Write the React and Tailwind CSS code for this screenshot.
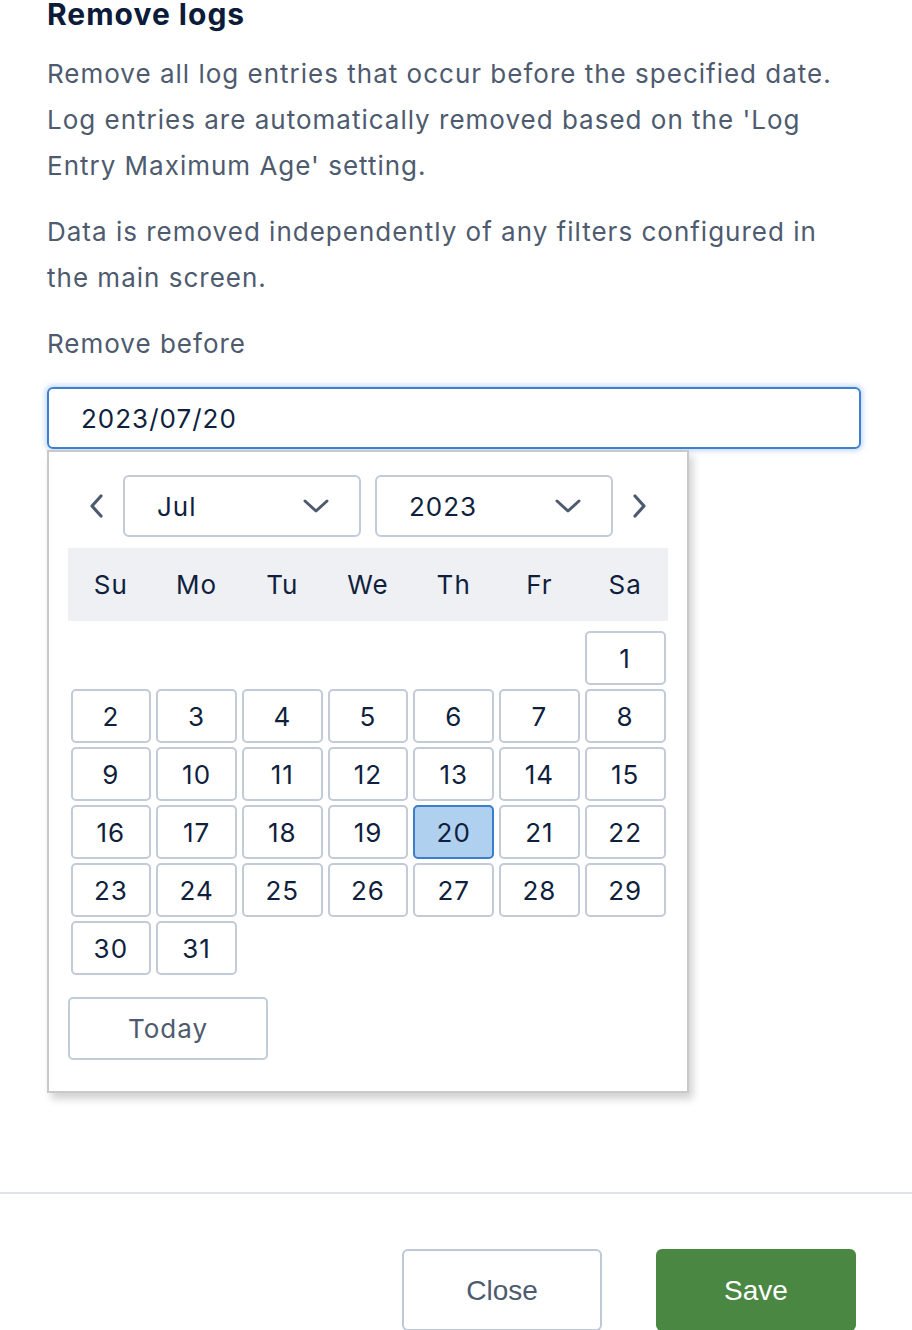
import React from "react";

const weekDays = ["Su", "Mo", "Tu", "We", "Th", "Fr", "Sa"];

// July 2023 starts on a Saturday
const buildWeeks = () => {
  const cells = Array(6).fill(null);
  for (let d = 1; d <= 31; d++) cells.push(d);
  while (cells.length % 7) cells.push(null);
  const weeks = [];
  for (let i = 0; i < cells.length; i += 7) weeks.push(cells.slice(i, i + 7));
  return weeks;
};

const ChevronDown = () => (
  <svg width="26" height="16" viewBox="0 0 26 16" fill="none">
    <path d="M2 3l11 10L24 3" stroke="#4e5b6f" strokeWidth="3" strokeLinecap="round" strokeLinejoin="round" />
  </svg>
);

const ChevronSide = ({ dir }) => (
  <svg width="16" height="26" viewBox="0 0 16 26" fill="none">
    {dir === "left" ? (
      <path d="M12 3L3 13l9 10" stroke="#4e5b6f" strokeWidth="3.2" strokeLinecap="round" strokeLinejoin="round" />
    ) : (
      <path d="M4 3l9 10-9 10" stroke="#4e5b6f" strokeWidth="3.2" strokeLinecap="round" strokeLinejoin="round" />
    )}
  </svg>
);

const Select = ({ value }) => (
  <div className="w-[238px] h-[62px] border-2 border-[#c3cbd8] rounded-[6px] flex items-center justify-between pl-[32px] pr-[30px] text-[26px] text-[#0f1f3d]">
    <span>{value}</span>
    <ChevronDown />
  </div>
);

const DatePopover = () => {
  const weeks = buildWeeks();
  return (
    <div className="absolute top-full left-0 mt-px w-[642px] bg-white border-2 border-[#c9c9c9] shadow-[4px_6px_8px_rgba(0,0,0,0.18)] px-[19px] pt-[23px] pb-[31px]">
      <div className="flex items-center">
        <div className="w-[55px] h-[62px] flex items-center justify-center pl-[3px]">
          <ChevronSide dir="left" />
        </div>
        <Select value="Jul" />
        <div className="w-[14px]" />
        <Select value="2023" />
        <div className="w-[55px] h-[62px] flex items-center justify-center pr-[3px]">
          <ChevronSide dir="right" />
        </div>
      </div>

      <div className="mt-[11px] h-[73px] bg-[#eff0f4] grid grid-cols-7 items-center">
        {weekDays.map((d) => (
          <div key={d} className="text-center text-[26px] text-[#0f1f3d]">
            {d}
          </div>
        ))}
      </div>

      <div className="mt-[8px]">
        {weeks.map((week, wi) => (
          <div key={wi} className="grid grid-cols-7">
            {week.map((day, di) => (
              <div key={di} className="h-[58px] px-[2.5px] py-[2px]">
                {day && (
                  <div
                    className={
                      day === 20
                        ? "h-full rounded-[5px] border-2 border-[#3b7dc9] bg-[#afd0ee] flex items-center justify-center text-[26px] text-[#0f1f3d]"
                        : "h-full rounded-[5px] border-2 border-[#c3cbd8] bg-white flex items-center justify-center text-[26px] text-[#0f1f3d]"
                    }
                  >
                    {day}
                  </div>
                )}
              </div>
            ))}
          </div>
        ))}
      </div>

      <button className="mt-[20px] w-[200px] h-[63px] border-2 border-[#c3cbd8] rounded-[5px] text-[26px] text-[#4e5b6f] bg-white tracking-[1px]">
        Today
      </button>
    </div>
  );
};

export default function App() {
  return (
    <div className="w-full h-[1330px] overflow-hidden bg-white font-['Inter','Liberation_Sans',sans-serif] tracking-[1px]">
      <div className="h-[1193px] pl-[47px] pr-[51px]">
        <h1 className="text-[30px] leading-none font-bold text-[#0d1b3a] -mt-[1px]">Remove logs</h1>
        <p className="mt-[22px] text-[26px] leading-[46px] text-[#4e5b6f]">
          Remove all log entries that occur before the specified date. Log entries are automatically removed based on the 'Log Entry Maximum Age' setting.
        </p>
        <p className="mt-[20px] text-[26px] leading-[46px] text-[#4e5b6f]">
          Data is removed independently of any filters configured in the main screen.
        </p>
        <div className="mt-[20px] text-[26px] leading-[46px] text-[#4e5b6f]">Remove before</div>
        <div className="relative mt-[20px]">
          <div className="h-[62px] border-2 border-[#3f7fd0] rounded-[6px] shadow-[0_0_5px_2px_rgba(90,150,230,0.35)] flex items-center pl-[32px] text-[26px] text-[#0f1f3d]">
            2023/07/20
          </div>
          <DatePopover />
        </div>
      </div>

      <div className="border-t-2 border-[#e1e5ea] flex justify-end gap-[54px] pr-[56px] pt-[55px] tracking-normal">
        <button className="w-[200px] h-[82px] rounded-[6px] border-2 border-[#bfc8d6] bg-white text-[28px] text-[#4e5b6f] font-['Liberation_Sans',sans-serif] pt-[2px]">
          Close
        </button>
        <button className="w-[200px] h-[82px] rounded-[6px] bg-[#4a8742] text-[28px] text-white font-['Liberation_Sans',sans-serif] pt-[2px]">
          Save
        </button>
      </div>
    </div>
  );
}
